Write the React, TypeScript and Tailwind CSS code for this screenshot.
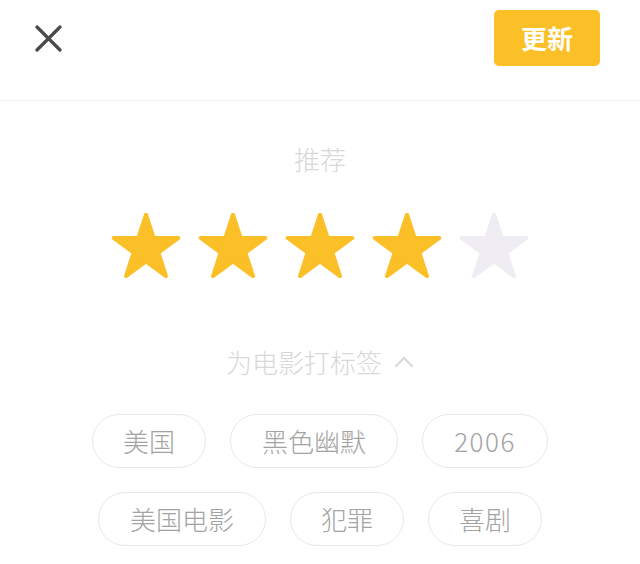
import React from "react";

const FONT = { fontFamily: '"Noto Sans CJK SC", "Noto Sans", sans-serif' };

function Star({ filled }: { filled: boolean }) {
  const c = filled ? "#fbbf28" : "#efedf3";
  return (
    <svg width="72" height="68" viewBox="0 0 72 68">
      <polygon
        points="36,1.5 43.63,24.99 68.33,24.99 48.34,39.51 55.99,63.01 36,48.49 16.01,63.01 23.66,39.51 3.67,24.99 28.37,24.99"
        fill={c}
        stroke={c}
        strokeWidth="4"
        strokeLinejoin="round"
      />
    </svg>
  );
}

function Tag({ label, className = "" }: { label: string; className?: string }) {
  return (
    <div
      className={`h-[54px] flex items-center justify-center rounded-full border border-[#e8e8e8] text-[26px] font-light leading-none text-[#a3a3a3] ${className}`}
    >
      {label}
    </div>
  );
}

export default function App() {
  return (
    <div className="w-[640px] h-[564px] bg-white overflow-hidden" style={FONT}>
      <div className="h-[100px] box-content border-b border-[#efeff2] flex items-start justify-between pl-[35px] pr-[40px]">
        <svg className="mt-[25px]" width="27" height="27" viewBox="0 0 27 27">
          <path d="M2 2 L25 25 M25 2 L2 25" stroke="#4a4a4a" strokeWidth="3.2" strokeLinecap="round" />
        </svg>
        <button className="mt-[10px] w-[106px] h-[56px] rounded-[5px] bg-[#fbbf28] text-white text-[26px] font-bold leading-none flex items-center justify-center">
          更新
        </button>
      </div>
      <div className="flex flex-col items-center">
        <div className="mt-[45px] text-[26px] font-light leading-[26px] text-[#d8d8d8]">推荐</div>
        <div className="mt-[41px] flex gap-[15px]">
          <Star filled />
          <Star filled />
          <Star filled />
          <Star filled />
          <Star filled={false} />
        </div>
        <div className="mt-[68px] flex items-center text-[26px] font-light leading-[26px] text-[#d8d8d8]">
          <span>为电影打标签</span>
          <svg className="ml-[12px]" width="20" height="12" viewBox="0 0 20 12">
            <path d="M2 10 L10 2 L18 10" stroke="#d8d8d8" strokeWidth="2.2" fill="none" strokeLinecap="round" strokeLinejoin="round" />
          </svg>
        </div>
        <div className="mt-[39px] flex gap-[24px]">
          <Tag label="美国" className="w-[114px]" />
          <Tag label="黑色幽默" className="w-[168px]" />
          <Tag label="2006" className="w-[126px] tracking-[1.5px]" />
        </div>
        <div className="mt-[24px] flex gap-[24px]">
          <Tag label="美国电影" className="w-[168px]" />
          <Tag label="犯罪" className="w-[114px]" />
          <Tag label="喜剧" className="w-[114px]" />
        </div>
      </div>
    </div>
  );
}
